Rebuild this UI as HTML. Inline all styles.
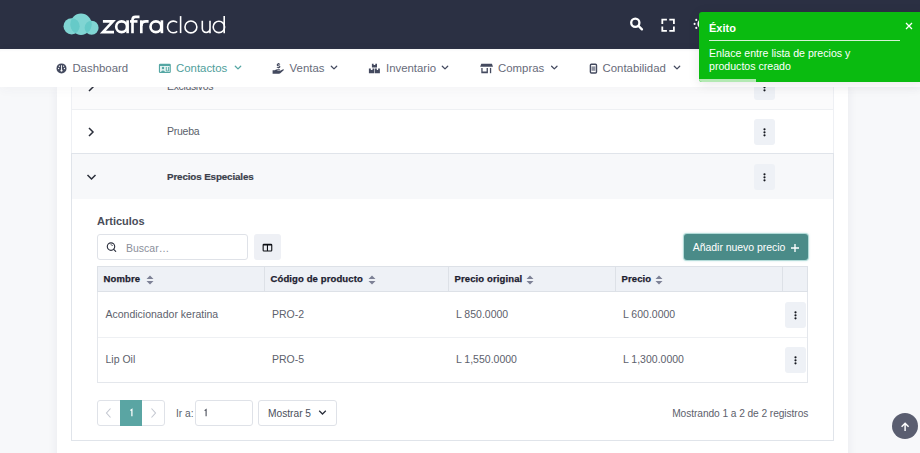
<!DOCTYPE html>
<html><head><meta charset="utf-8">
<style>
*{box-sizing:border-box;margin:0;padding:0}
html,body{width:920px;height:453px;overflow:hidden;background:#f7f8fa;font-family:"Liberation Sans",sans-serif}
.a{position:absolute}
.t{position:absolute;line-height:1;white-space:nowrap}
#hdr{left:0;top:0;width:920px;height:49px;background:#2b3043}
#nav{left:0;top:49px;width:920px;height:38px;background:#fff;box-shadow:0 2px 12px rgba(60,60,90,.045), inset 0 3px 3px -2px rgba(40,40,60,.05);z-index:5}
.nav{font-size:11.4px;color:#676b7a}
.nav.act{color:#4e9e9b}
#card{left:56.8px;top:87px;width:791.4px;height:380px;background:#fff;box-shadow:0 0 10px rgba(40,40,80,.07)}
#acc{left:71px;top:70px;width:763px;height:371px;border:1px solid #eef0f4;border-top:none;background:#fff}
.row{position:absolute;left:72px;width:761px}
.kb{position:absolute;left:754px;width:21px;height:26px;background:#eef1f6;border-radius:3px}
.dots{position:absolute;left:8.9px;top:9.1px;width:3px;height:9px;fill:#15171f}
.dots i{display:block;width:2.5px;height:2.5px;border-radius:50%;background:#15171f;margin-bottom:.5px}
.chev{position:absolute}
.th{font-weight:bold;font-size:9.5px;color:#1c2030;top:274.1px;letter-spacing:0.12px;-webkit-text-stroke:0.25px #1c2030}
.td{font-size:10.5px;color:#5d616c}
</style></head><body>
<div id="hdr" class="a">
  <svg class="a" style="left:0;top:0" width="240" height="49" viewBox="0 0 240 49">
    <defs>
      <clipPath id="cl"><circle cx="71.6" cy="26.3" r="8.1"/></clipPath>
      <clipPath id="cr"><circle cx="91.6" cy="27.75" r="7"/></clipPath>
    </defs>
    <circle cx="71.6" cy="26.3" r="8.1" fill="#80d5d3"/>
    <circle cx="81" cy="24.25" r="10.7" fill="#80d5d3"/>
    <circle cx="91.6" cy="27.75" r="7" fill="#80d5d3"/>
    <circle cx="81" cy="24.25" r="10.7" fill="#66cac8" clip-path="url(#cl)"/>
    <circle cx="81" cy="24.25" r="10.7" fill="#66cac8" clip-path="url(#cr)"/>
    <g fill="none" stroke="#fff" stroke-width="2.65">
      <path d="M102.9 21.4 H112.9 L102.9 32.1 H114" stroke-linejoin="miter"/>
      <circle cx="121.6" cy="26.75" r="5.4"/>
      <path d="M127.6 20.3 V33.2"/>
      <path d="M132.5 33.2 V19.8 Q132.5 16.8 135.5 16.8 H139.5"/>
      <path d="M130 21.4 H137.5"/>
      <path d="M141.3 33.2 V26 Q141.3 21.4 146 21.4 H148.6"/>
      <path d="M141.3 20.3 V26"/>
      <circle cx="155.9" cy="26.75" r="5.4"/>
      <path d="M161.9 20.3 V33.2"/>
    </g>
    <g fill="none" stroke="#fff" stroke-width="1.6">
      <path d="M177.2 22.5 A5.85 5.85 0 1 0 177.2 31.4"/>
      <path d="M180.6 16.1 V33.1"/>
      <circle cx="190.9" cy="26.95" r="5.95"/>
      <path d="M202.3 20.7 V28.6 A3.85 3.85 0 0 0 210 28.6 V20.7 M210 28 V33.2"/>
      <circle cx="218.9" cy="26.95" r="5.7"/>
      <path d="M224.2 16.1 V33.2"/>
    </g>
  </svg>
  <!-- search -->
  <svg class="a" style="left:620px;top:10px" width="60" height="30" viewBox="620 10 60 30">
    <circle cx="635.3" cy="22.7" r="4.1" fill="none" stroke="#fff" stroke-width="2.3"/>
    <path d="M638.6 26 L641.9 29.3" stroke="#fff" stroke-width="2.4" stroke-linecap="round"/>
    <path d="M662.3 24 V19.6 H666.9 M669.3 19.6 H673.9 V24 M673.9 26.4 V30.9 H669.3 M666.9 30.9 H662.3 V26.4" fill="none" stroke="#fff" stroke-width="1.8"/>
  </svg>
  <!-- sun (partially hidden) -->
  <svg class="a" style="left:680px;top:0" width="40" height="49" viewBox="680 0 40 49">
    <circle cx="702.2" cy="23.9" r="4.8" fill="#fff"/>
    <circle cx="696.3" cy="19.9" r="1.05" fill="#fff"/><circle cx="694.6" cy="23.9" r="1.05" fill="#fff"/><circle cx="696.3" cy="27.9" r="1.05" fill="#fff"/>
  </svg>
</div>

<div id="card" class="a"></div>
<div id="acc" class="a"></div>
<div class="a" style="left:71px;top:153px;width:763px;height:288px;border:1px solid #e0e4ea;background:#fff"></div>

<!-- Exclusivos row (partially hidden) -->
<div class="row" style="top:70px;height:40px;border-bottom:1px solid #eef0f3;background:#fbfbfc"></div>
<svg class="chev a" style="left:87px;top:80.5px" width="8" height="12" viewBox="0 0 8 12"><path d="M2 2 L6 6 L2 10" fill="none" stroke="#2a2e3a" stroke-width="1.5"/></svg>
<div class="t td" style="left:167px;top:81.2px;font-size:10.5px;color:#5b5f6b;letter-spacing:-0.35px">Exclusivos</div>
<div class="kb" style="top:74px"><svg class="dots" viewBox="0 0 3 9"><circle cx="1.5" cy="1.3" r="1.1"/><circle cx="1.5" cy="4.3" r="1.1"/><circle cx="1.5" cy="7.3" r="1.1"/></svg></div>

<!-- Prueba row -->
<svg class="chev a" style="left:87px;top:126px" width="8" height="12" viewBox="0 0 8 12"><path d="M2 2 L6 6 L2 10" fill="none" stroke="#2a2e3a" stroke-width="1.5"/></svg>
<div class="t" style="left:167px;top:126.2px;font-size:10.5px;color:#5b5f6b;letter-spacing:-0.25px">Prueba</div>
<div class="kb" style="top:118.5px"><svg class="dots" viewBox="0 0 3 9"><circle cx="1.5" cy="1.3" r="1.1"/><circle cx="1.5" cy="4.3" r="1.1"/><circle cx="1.5" cy="7.3" r="1.1"/></svg></div>

<!-- Precios Especiales row -->
<div class="row" style="top:154px;height:45px;background:#f7f8fa"></div>
<svg class="chev a" style="left:86px;top:173px" width="11" height="8" viewBox="0 0 11 8"><path d="M1.5 2 L5.5 6 L9.5 2" fill="none" stroke="#2a2e3a" stroke-width="1.5"/></svg>
<div class="t" style="left:167px;top:171.9px;font-size:9.8px;font-weight:bold;color:#3b3f4b;letter-spacing:-0.12px;-webkit-text-stroke:0.2px #3b3f4b">Precios Especiales</div>
<div class="kb" style="top:163.5px"><svg class="dots" viewBox="0 0 3 9"><circle cx="1.5" cy="1.3" r="1.1"/><circle cx="1.5" cy="4.3" r="1.1"/><circle cx="1.5" cy="7.3" r="1.1"/></svg></div>

<!-- Articulos -->
<div class="t" style="left:97px;top:215.9px;font-size:11px;font-weight:bold;color:#4a4e5a">Articulos</div>
<div class="a" style="left:97px;top:234.4px;width:151px;height:26px;border:1px solid #dfe2e8;border-radius:3px;background:#fff"></div>
<svg class="a" style="left:100px;top:236px" width="30" height="22" viewBox="100 236 30 22">
  <circle cx="111" cy="246.6" r="3.7" fill="none" stroke="#2f3340" stroke-width="1.15"/>
  <path d="M110.6 244.6 Q112.3 244.8 112.7 246" fill="none" stroke="#2f3340" stroke-width="0.8"/>
  <path d="M113.7 249.3 L115.7 251.3" stroke="#2f3340" stroke-width="1.2" stroke-linecap="round"/>
</svg>
<div class="t" style="left:126px;top:242.6px;font-size:10.5px;color:#8b8f9b">Buscar…</div>
<div class="a" style="left:254px;top:234px;width:27px;height:26px;background:#eef0f5;border-radius:3px"></div>
<svg class="a" style="left:256px;top:238px" width="22" height="18" viewBox="256 238 22 18">
  <path d="M263.9 243.8 H271 Q272.3 243.8 272.3 245.1 V250.2 Q272.3 251.5 271 251.5 H263.9 Q262.6 251.5 262.6 250.2 V245.1 Q262.6 243.8 263.9 243.8Z M263.7 245.6 V250.5 H266.9 V245.6Z M268 245.6 V250.5 H271.2 V245.6Z" fill="#0d0f14" fill-rule="evenodd"/>
</svg>

<!-- Add button -->
<div class="a" style="left:684px;top:234px;width:124px;height:26px;border-radius:3px;background:#4a8b88;box-shadow:0 0 0 1px #b3dbd8, 0 0 2px 1px rgba(150,210,205,.5)"></div>
<div class="t" style="left:692.8px;top:242.2px;font-size:10.5px;color:#fff;letter-spacing:-0.05px">Añadir nuevo precio</div>
<svg class="a" style="left:790px;top:243px" width="10" height="10" viewBox="0 0 10 10"><path d="M5 1 V9 M1 5 H9" stroke="#fff" stroke-width="1.35"/></svg>

<!-- Table -->
<div class="a" style="left:97px;top:266px;width:711px;height:117px;border:1px solid #e4e7ec;background:#fff"></div>
<div class="a" style="left:97px;top:266px;width:711px;height:26px;border:1px solid #dde1e7;background:#eef1f6"></div>
<div class="a" style="left:264px;top:266px;width:1px;height:26px;background:#dde1e7"></div>
<div class="a" style="left:448px;top:266px;width:1px;height:26px;background:#dde1e7"></div>
<div class="a" style="left:615px;top:266px;width:1px;height:26px;background:#dde1e7"></div>
<div class="a" style="left:782px;top:266px;width:1px;height:26px;background:#dde1e7"></div>
<div class="a" style="left:98px;top:337px;width:709px;height:1px;background:#eef0f3"></div>

<div class="t th" style="left:103.5px">Nombre</div>
<div class="t th" style="left:270.5px">Código de producto</div>
<div class="t th" style="left:454.5px">Precio original</div>
<div class="t th" style="left:621.5px">Precio</div>
<svg class="a sort" style="left:146px;top:275px" width="8" height="10" viewBox="0 0 8 10"><path d="M4 0.5 L7.5 4 H0.5Z M4 9.5 L7.5 6 H0.5Z" fill="#7d8196"/></svg>
<svg class="a sort" style="left:368px;top:275px" width="8" height="10" viewBox="0 0 8 10"><path d="M4 0.5 L7.5 4 H0.5Z M4 9.5 L7.5 6 H0.5Z" fill="#7d8196"/></svg>
<svg class="a sort" style="left:526px;top:275px" width="8" height="10" viewBox="0 0 8 10"><path d="M4 0.5 L7.5 4 H0.5Z M4 9.5 L7.5 6 H0.5Z" fill="#7d8196"/></svg>
<svg class="a sort" style="left:655px;top:275px" width="8" height="10" viewBox="0 0 8 10"><path d="M4 0.5 L7.5 4 H0.5Z M4 9.5 L7.5 6 H0.5Z" fill="#7d8196"/></svg>

<div class="t td" style="left:105.5px;top:309.3px">Acondicionador keratina</div>
<div class="t td" style="left:272px;top:309.3px">PRO-2</div>
<div class="t td" style="left:456px;top:309.3px">L 850.0000</div>
<div class="t td" style="left:623px;top:309.3px">L 600.0000</div>
<div class="kb" style="left:785px;top:301.5px"><svg class="dots" viewBox="0 0 3 9"><circle cx="1.5" cy="1.3" r="1.1"/><circle cx="1.5" cy="4.3" r="1.1"/><circle cx="1.5" cy="7.3" r="1.1"/></svg></div>

<div class="t td" style="left:105.5px;top:354.0px">Lip Oil</div>
<div class="t td" style="left:272px;top:354.0px">PRO-5</div>
<div class="t td" style="left:456px;top:354.0px">L 1,550.0000</div>
<div class="t td" style="left:623px;top:354.0px">L 1,300.0000</div>
<div class="kb" style="left:785px;top:346.5px"><svg class="dots" viewBox="0 0 3 9"><circle cx="1.5" cy="1.3" r="1.1"/><circle cx="1.5" cy="4.3" r="1.1"/><circle cx="1.5" cy="7.3" r="1.1"/></svg></div>

<!-- Pagination -->
<div class="a" style="left:97px;top:400px;width:68px;height:26px;border:1px solid #dfe2e8;border-radius:3px;background:#fff"></div>
<div class="a" style="left:120.3px;top:400px;width:21.5px;height:26px;background:#5aa5a3"></div>
<svg class="a" style="left:105px;top:407px" width="7" height="12" viewBox="0 0 7 12"><path d="M5.5 1.5 L1.5 6 L5.5 10.5" fill="none" stroke="#c3c7d0" stroke-width="1.1"/></svg>
<svg class="a" style="left:150px;top:407px" width="7" height="12" viewBox="0 0 7 12"><path d="M1.5 1.5 L5.5 6 L1.5 10.5" fill="none" stroke="#c3c7d0" stroke-width="1.1"/></svg>
<svg class="a" style="left:125px;top:405px" width="12" height="15" viewBox="125 405 12 15"><path d="M130.4 410.6 L131.9 409.5 V416.3" fill="none" stroke="#fff" stroke-width="1.25"/></svg>
<div class="t" style="left:176px;top:409px;font-size:10.2px;color:#5b5f6b">Ir a:</div>
<div class="a" style="left:195px;top:400px;width:58px;height:26px;border:1px solid #dfe2e8;border-radius:3px;background:#fff"></div>
<svg class="a" style="left:200px;top:405px" width="12" height="15" viewBox="200 405 12 15"><path d="M204.6 410.6 L206.1 409.5 V416.3" fill="none" stroke="#4b4f5b" stroke-width="1.1"/></svg>
<div class="a" style="left:258px;top:400px;width:79px;height:26px;border:1px solid #dfe2e8;border-radius:3px;background:#fff"></div>
<div class="t" style="left:268px;top:409px;font-size:10.2px;color:#4b4f5b">Mostrar 5</div>
<svg class="a" style="left:318px;top:409px" width="9" height="7" viewBox="0 0 9 7"><path d="M1.2 1.7 L4.5 5 L7.8 1.7" fill="none" stroke="#2a2e3a" stroke-width="1.25"/></svg>
<div class="t" style="left:672.2px;top:408.8px;font-size:10.2px;color:#5d616c;letter-spacing:-0.07px">Mostrando 1 a 2 de 2 registros</div>

<!-- Nav bar -->
<div id="nav" class="a">
  <div class="t nav" style="left:72.4px;top:14.2px">Dashboard</div>
  <div class="t nav act" style="left:176px;top:14.2px">Contactos</div>
  <div class="t nav" style="left:289.6px;top:14.2px">Ventas</div>
  <div class="t nav" style="left:386px;top:14.2px">Inventario</div>
  <div class="t nav" style="left:498px;top:14.2px">Compras</div>
  <div class="t nav" style="left:602.5px;top:14.2px">Contabilidad</div>
  <svg class="a" style="left:0;top:0" width="700" height="38" viewBox="0 49 700 38">
    <!-- dashboard gauge -->
    <circle cx="61.5" cy="68.4" r="5" fill="#444a5f"/>
    <path d="M61.5 65.2 V70.2" stroke="#fff" stroke-width="0.9"/>
    <circle cx="61.5" cy="70.6" r="1.15" fill="#fff"/>
    <g fill="#fff"><circle cx="58.6" cy="68.5" r="0.65"/><circle cx="59.4" cy="66.2" r="0.65"/><circle cx="63.6" cy="66.2" r="0.65"/><circle cx="64.4" cy="68.5" r="0.65"/></g>
    <!-- contactos card -->
    <rect x="158.9" y="63.7" width="11.9" height="9.3" rx="1.3" fill="#54a6a3"/>
    <rect x="160" y="66" width="9.7" height="5.9" fill="#e3f2f1"/>
    <circle cx="163" cy="68" r="1.2" fill="#54a6a3"/>
    <path d="M160.9 71.9 Q163 69.3 165.1 71.9Z" fill="#54a6a3"/>
    <path d="M166.3 67 V71 H168.6 V67" fill="none" stroke="#54a6a3" stroke-width="0.9"/>
    <!-- chevrons -->
    <g fill="none" stroke-width="1.3" stroke-linecap="round" stroke-linejoin="round">
      <path d="M235.3 66.3 L238 68.9 L240.7 66.3" stroke="#54a6a3"/>
      <path d="M331.3 66.3 L334 68.9 L336.7 66.3" stroke="#444a5f"/>
      <path d="M442.3 66.3 L445 68.9 L447.7 66.3" stroke="#444a5f"/>
      <path d="M551.6 66.3 L554.3 68.9 L557 66.3" stroke="#444a5f"/>
      <path d="M674.3 66.3 L677 68.9 L679.7 66.3" stroke="#444a5f"/>
    </g>
    <!-- ventas hand + dollar -->
    <path d="M279.9 64.5 Q279.4 63.9 278.5 63.9 Q277.2 63.9 277.2 64.9 Q277.2 65.6 278.5 65.7 Q279.9 65.8 279.9 66.7 Q279.9 67.6 278.5 67.6 Q277.4 67.6 276.9 67" fill="none" stroke="#444a5f" stroke-width="1.1"/>
    <path d="M278.5 63.2 V64 M278.5 67.5 V68.2" stroke="#444a5f" stroke-width="1"/>
    <path d="M272.6 70.3 H274.8 Q276 69.3 277.6 69.3 H279.4 Q280.3 69.4 280.1 70.1 Q279.9 70.6 279.1 70.6 H277.3 L277.5 71 H279.6 L282.6 69.4 Q283.9 68.9 283.9 69.9 L280.6 72.9 Q280 73.7 279 73.7 H272.6Z" fill="#444a5f"/>
    <!-- inventario boxes -->
    <g fill="#444a5f">
      <path d="M371.9 63.7 H373.6 V65 H375.3 V63.7 H377 V67.5 H371.9Z"/>
      <path d="M368.9 68.6 H370.8 V69.9 H372.5 V68.6 H374.4 V73.2 H368.9Z"/>
      <path d="M375 68.6 H376.8 V69.9 H378.1 V68.6 H379.9 V73.2 H375Z"/>
    </g>
    <!-- compras store -->
    <g fill="#444a5f">
      <path d="M481.3 63.7 H491.9 L493 66.8 H480.2Z"/>
      <path d="M481.3 67.9 H482.6 V71.6 H486.6 V67.9 H487.9 V73.2 H481.3Z"/>
      <rect x="489.9" y="67.9" width="1.3" height="5.3"/>
    </g>
    <!-- contabilidad calculator -->
    <rect x="590.4" y="64.2" width="6.1" height="8.8" rx="1" fill="none" stroke="#444a5f" stroke-width="1.4"/>
    <rect x="591.5" y="66.4" width="3.9" height="4.4" fill="#8e92a0"/>
  </svg>
</div>

<!-- Toast -->
<div class="a" style="left:699px;top:12px;width:226px;height:70px;background:#0abb10;border-radius:3px;box-shadow:0 2px 12px rgba(30,30,40,.1);z-index:10;overflow:hidden">
  <div class="t" style="left:10px;top:11px;font-size:11px;font-weight:bold;color:#fff">Éxito</div>
  <div class="a" style="left:10px;top:28px;width:191px;height:1px;background:#d6f3d6"></div>
  <svg class="a" style="left:206px;top:10px" width="8" height="8" viewBox="0 0 8 8"><path d="M1 1 L7 7 M7 1 L1 7" stroke="#fff" stroke-width="1.3"/></svg>
  <div class="t" style="left:10px;top:35px;font-size:10.6px;color:#fff;line-height:12.5px">Enlace entre lista de precios y<br>productos creado</div>
  <div class="a" style="left:0;top:67px;width:57px;height:3px;background:#b3e9b3"></div>
</div>

<!-- scroll top -->
<div class="a" style="left:892.2px;top:413.2px;width:26px;height:26px;border-radius:50%;background:#5a5e70"></div>
<svg class="a" style="left:899px;top:420px" width="12" height="12" viewBox="0 0 12 12"><path d="M6.1 11 V3.4 M2.6 6.8 L6.1 3.3 L9.6 6.8" fill="none" stroke="#fff" stroke-width="1.45"/></svg>
</body></html>
